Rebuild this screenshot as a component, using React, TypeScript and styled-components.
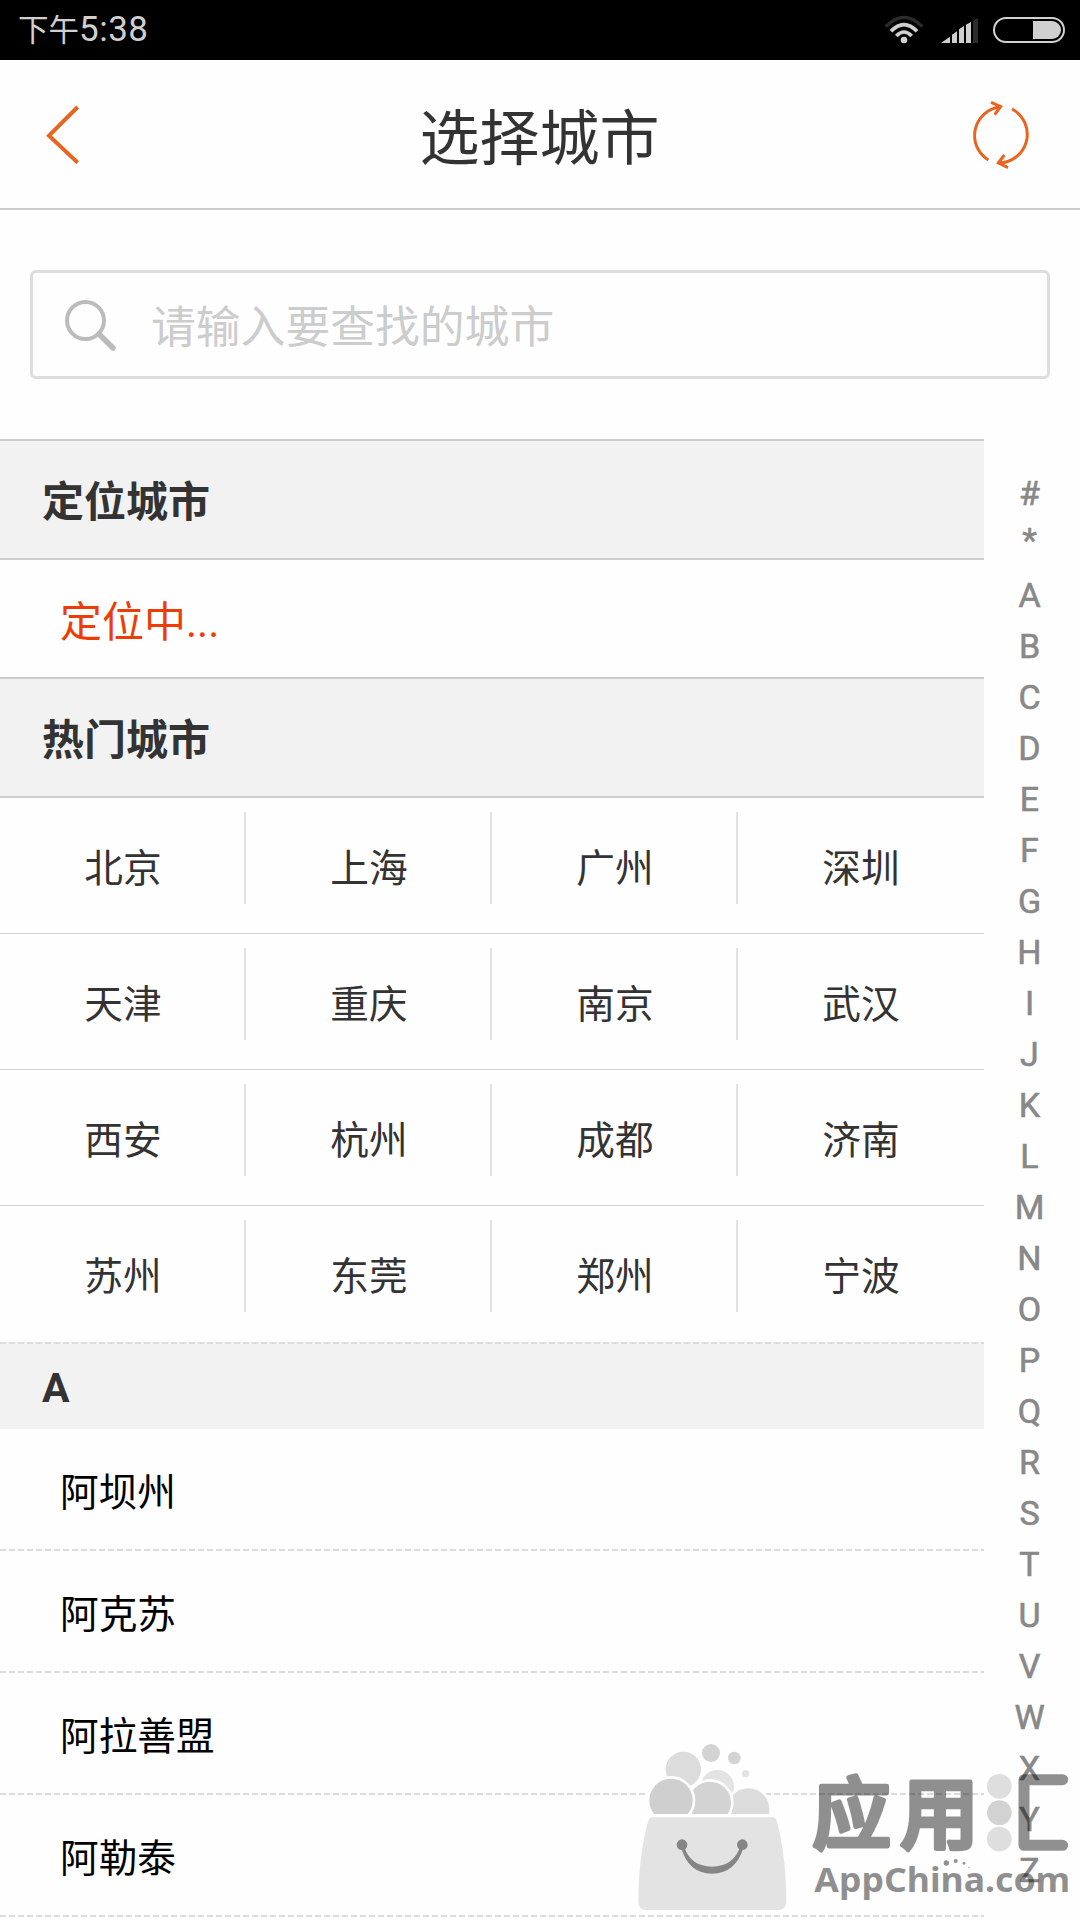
import React from 'react';
import styled, { createGlobalStyle } from 'styled-components';

const GlobalStyle = createGlobalStyle`
  * { box-sizing: border-box; }
  body { margin: 0; background: #fff; }
`;

const Screen = styled.div`
  position: relative;
  width: 1080px;
  height: 1920px;
  overflow: hidden;
  display: flex;
  flex-direction: column;
  background: #fefefe;
  color: #333;
  font-family: Roboto, 'Noto Sans CJK SC', sans-serif;
`;

const StatusBar = styled.div`
  flex: none;
  height: 60px;
  padding: 0 14px 0 18px;
  display: flex;
  align-items: center;
  background: #000;
  color: #cfcfcf;
`;

const Clock = styled.div`
  flex: 1;
  display: flex;
  align-items: center;
  line-height: 60px;
`;

const Period = styled.span`
  padding-top: 1px;
  font-size: 30.5px;
`;

const Time = styled.span`
  font-size: 35px;
  letter-spacing: 0.5px;
`;

const StatusIcon = styled.svg<{ $gap?: number }>`
  display: block;
  height: 30px;
  margin-left: ${(p) => p.$gap ?? 0}px;
`;

const Header = styled.header`
  flex: none;
  height: 150px;
  padding: 0 49px 0 45px;
  display: flex;
  align-items: center;
  justify-content: space-between;
  border-bottom: 2px solid #ccc;
`;

const HeaderButton = styled.button<{ $align: string }>`
  width: 90px;
  height: 100px;
  padding: 1px 0 0;
  border: 0;
  background: none;
  display: flex;
  align-items: center;
  justify-content: ${(p) => p.$align};
`;

const Title = styled.h1`
  margin: 0;
  padding: 12px 0 0 3px;
  font-size: 60px;
  line-height: 90px;
  font-weight: 400;
`;

const SearchArea = styled.div`
  flex: none;
  height: 229px;
  padding: 60px 30px 0;
`;

const SearchBox = styled.label`
  height: 109px;
  padding-left: 32px;
  display: flex;
  align-items: center;
  border: 3px solid #ddd;
  border-radius: 6px;
`;

const Placeholder = styled.span`
  margin: 6px 0 0 34px;
  font-size: 44.8px;
  line-height: 66px;
  color: #ccc;
`;

const Body = styled.div`
  flex: 1;
  display: flex;
`;

const CityColumn = styled.main`
  width: 984px;
`;

const SectionTitle = styled.h2`
  height: 121px;
  margin: 0;
  padding: 2px 0 0 42px;
  border: solid #ccc;
  border-width: 2px 0;
  background: #f2f2f2;
  font-size: 42px;
  line-height: 119px;
  font-weight: 700;
`;

const Locating = styled.div`
  height: 117px;
  padding: 1px 0 0 60px;
  font-size: 42px;
  line-height: 123px;
  color: #ed3d06;
`;

const HotGrid = styled.div`
  display: grid;
  grid-template-columns: repeat(4, 246px);
  grid-auto-rows: 136px;
`;

const HotCity = styled.div<{ $lastRow: boolean; $lastCol: boolean }>`
  display: flex;
  align-items: flex-start;
  padding-top: 14px;
  border-bottom: ${(p) => (p.$lastRow ? '0' : '1px solid #d4d4d4')};

  span {
    flex: 1;
    height: 92px;
    padding: 1px 0 0 2px;
    border-right: 2px solid ${(p) => (p.$lastCol ? 'transparent' : '#e2e2e2')};
    text-align: center;
    font-size: 38.7px;
    line-height: 112px;
  }
`;

const dashes = `repeating-linear-gradient(90deg, #dcdcdc 0 6px, transparent 6px 9px)`;

const LetterTitle = styled.h2`
  height: 87px;
  margin: 0;
  padding: 1px 0 0 42px;
  background: ${dashes} 0 0 / 100% 2px no-repeat, #f2f2f2;
  font-size: 41px;
  line-height: 91px;
  font-weight: 700;
`;

const CityRow = styled.div`
  height: 122px;
  padding: 3px 0 0 60px;
  background: ${dashes} 0 100% / 100% 2px no-repeat;
  font-size: 38.7px;
  line-height: 122px;
  color: #000;
`;

const IndexColumn = styled.nav`
  width: 96px;
  padding: 29px 5px 0 0;
  display: flex;
  flex-direction: column;
  align-items: center;
`;

const IndexLetter = styled.span<{ $raised: boolean }>`
  flex: none;
  height: 51px;
  font-size: 34px;
  line-height: ${(p) => (p.$raised ? 43 : 51)}px;
  font-weight: 400;
  color: #888;
  -webkit-text-stroke: 0.6px #888;
`;

const Watermark = styled.svg`
  position: absolute;
  left: 620px;
  top: 1720px;
  font-family: 'Noto Sans CJK SC', sans-serif;
`;

const HOT = ['北京', '上海', '广州', '深圳', '天津', '重庆', '南京', '武汉', '西安', '杭州', '成都', '济南', '苏州', '东莞', '郑州', '宁波'];
const CITIES = ['阿坝州', '阿克苏', '阿拉善盟', '阿勒泰'];
const INDEX = '#*ABCDEFGHIJKLMNOPQRSTUVWXYZ'.split('');

function Wifi() {
  return (
    <StatusIcon width="40" viewBox="72 45 120 90" fill="none" stroke="#d0d0d0">
      <path d="M77 80Q132 24 187 80" stroke="#2c2c2c" strokeWidth="10" />
      <path d="M93 94Q132 54 171 94" strokeWidth="11" />
      <path d="M109 108Q132 84 155 108" strokeWidth="11" />
      <circle cx="132" cy="120" r="10" fill="#d0d0d0" stroke="none" />
    </StatusIcon>
  );
}

function Signal() {
  return (
    <StatusIcon $gap={16} width="40" viewBox="240 45 120 90" fill="#d0d0d0">
      <path d="M243 129L270 110V129ZM276 104L291 94V129H276ZM297 88L312 78V129H297ZM318 74L333 66V129H318Z" />
      <path d="M339 62L354 54V129H339Z" fill="#2c2c2c" />
    </StatusIcon>
  );
}

function Battery() {
  return (
    <StatusIcon $gap={12} width="74" viewBox="396 45 222 90">
      <rect x="402" y="54" width="210" height="72" rx="36" fill="none" stroke="#d0d0d0" strokeWidth="6" />
      <path d="M519 63H576A27 27 0 0 1 576 117H519Z" fill="#d0d0d0" />
    </StatusIcon>
  );
}

function BagWatermark() {
  return (
    <Watermark width="460" height="200" viewBox="0 0 1380 600">
      <g stroke="#fefefe" strokeWidth="8">
        <circle cx="292" cy="200" r="54" fill="#e3e3e3" />
        <circle cx="190" cy="148" r="57" fill="#dcdcdc" />
        <circle cx="385" cy="268" r="67" fill="#dcdcdc" />
        <circle cx="270" cy="248" r="67" fill="#d3d3d3" />
        <circle cx="153" cy="241" r="69" fill="#cfcfcf" />
      </g>
      <circle cx="273" cy="99" r="27" fill="#d3d3d3" />
      <circle cx="343" cy="114" r="19" fill="#d3d3d3" />
      <circle cx="377" cy="161" r="11" fill="#e3e3e3" />
      <path d="M70 282H480V350H70Z" fill="#fefefe" />
      <path d="M97 292H458Q467 292 469 300Q498 400 499 545Q499 570 474 570H80Q55 570 55 545Q56 400 86 300Q88 292 97 292Z" fill="#e3e3e3" />
      <g fill="#858585">
        <circle cx="186" cy="374" r="16" />
        <circle cx="367" cy="374" r="16" />
        <path d="M183 382Q205 461 276 461Q347 461 371 382L360 382Q339 440 276 440Q213 440 193 382Z" />
      </g>
      <g fill="#000" opacity="0.43">
        <g stroke="#000" strokeWidth="14" strokeLinejoin="round">
          <text x="577" y="368" fontSize="236" fontWeight="500">应</text>
          <text x="840" y="368" fontSize="236" fontWeight="500">用</text>
        </g>
        <text x="583" y="515" fontSize="100" fontWeight="700" fontFamily="'Noto Sans'" textLength="768" lengthAdjust="spacingAndGlyphs">AppChina.com</text>
        <circle cx="979" cy="429" r="8" />
        <circle cx="1007" cy="423" r="6" />
        <circle cx="1032" cy="430" r="4" />
        <circle cx="1047" cy="442" r="2" />
      </g>
      <circle cx="1138" cy="199" r="37" fill="#dedede" />
      <circle cx="1138" cy="278" r="37" fill="#d2d2d2" />
      <circle cx="1138" cy="357" r="37" fill="#dedede" />
      <path d="M1328 179H1212V376H1328" fill="none" stroke="#000" strokeOpacity="0.43" strokeWidth="33" strokeLinecap="round" strokeLinejoin="round" />
    </Watermark>
  );
}

export default function App() {
  return (
    <Screen>
      <GlobalStyle />
      <StatusBar>
        <Clock><Period>下午</Period><Time>5:38</Time></Clock>
        <Wifi />
        <Signal />
        <Battery />
      </StatusBar>
      <Header>
        <HeaderButton $align="flex-start" aria-label="返回">
          <svg width="35" height="61" viewBox="135 312 105 183">
            <path d="M233 321L147 407L233 488" fill="none" stroke="#e8641f" strokeWidth="12" />
          </svg>
        </HeaderButton>
        <Title>选择城市</Title>
        <HeaderButton $align="flex-end" aria-label="刷新">
          <svg width="62" height="70" viewBox="330 300 186 210" fill="none" stroke="#e8641f" strokeWidth="9">
            <path d="M388 480A86 86 0 0 1 424 321M396 307L425 320L407 344" />
            <path d="M459 327A86 86 0 0 1 418 489M436 465L418 489L447 503" />
          </svg>
        </HeaderButton>
      </Header>
      <SearchArea>
        <SearchBox>
          <svg width="52" height="52" viewBox="0 0 52 52" fill="none" stroke="#bbb">
            <circle cx="20.5" cy="21.5" r="18.5" strokeWidth="4" />
            <path d="M34 35L48 49" strokeWidth="5.5" strokeLinecap="round" />
          </svg>
          <Placeholder>请输入要查找的城市</Placeholder>
        </SearchBox>
      </SearchArea>
      <Body>
        <CityColumn>
          <SectionTitle>定位城市</SectionTitle>
          <Locating>定位中...</Locating>
          <SectionTitle>热门城市</SectionTitle>
          <HotGrid>
            {HOT.map((name, i) => (
              <HotCity key={name} $lastRow={i >= 12} $lastCol={i % 4 === 3}>
                <span>{name}</span>
              </HotCity>
            ))}
          </HotGrid>
          <LetterTitle>A</LetterTitle>
          {CITIES.map((name) => <CityRow key={name}>{name}</CityRow>)}
        </CityColumn>
        <IndexColumn>
          {INDEX.map((letter) => (
            <IndexLetter key={letter} $raised={letter === '*'}>{letter}</IndexLetter>
          ))}
        </IndexColumn>
      </Body>
      <BagWatermark />
    </Screen>
  );
}
